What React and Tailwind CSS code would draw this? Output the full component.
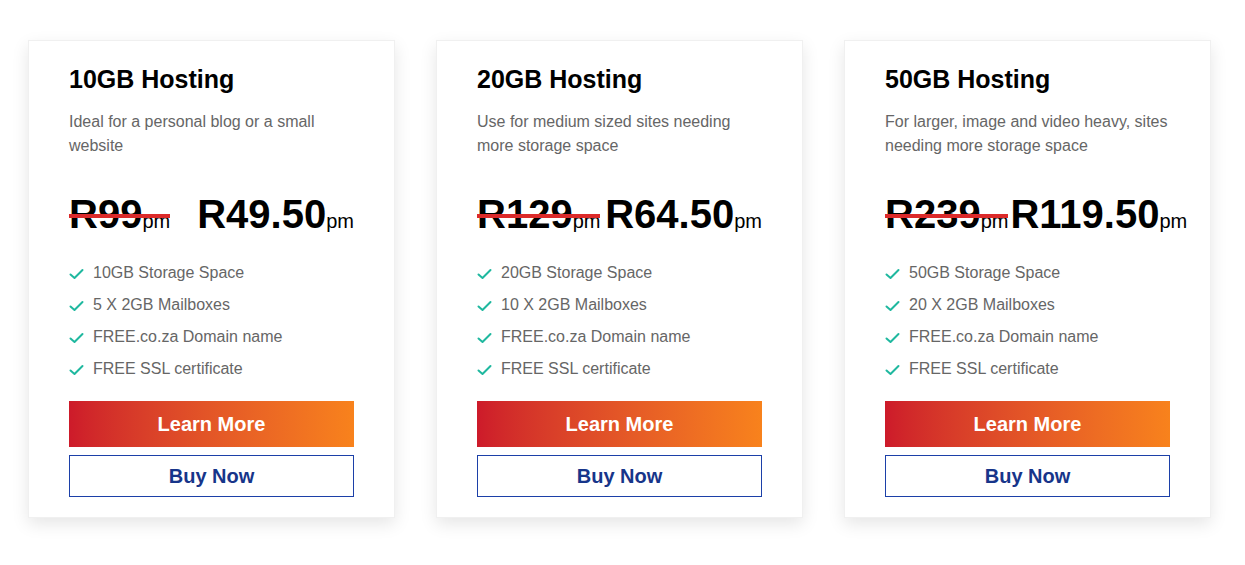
const plans = [
  {
    title: "10GB Hosting",
    desc: "Ideal for a personal blog or a small website",
    oldPrice: "R99",
    price: "R49.50",
    features: ["10GB Storage Space", "5 X 2GB Mailboxes", "FREE.co.za Domain name", "FREE SSL certificate"],
  },
  {
    title: "20GB Hosting",
    desc: "Use for medium sized sites needing more storage space",
    oldPrice: "R129",
    price: "R64.50",
    features: ["20GB Storage Space", "10 X 2GB Mailboxes", "FREE.co.za Domain name", "FREE SSL certificate"],
  },
  {
    title: "50GB Hosting",
    desc: "For larger, image and video heavy, sites needing more storage space",
    oldPrice: "R239",
    price: "R119.50",
    features: ["50GB Storage Space", "20 X 2GB Mailboxes", "FREE.co.za Domain name", "FREE SSL certificate"],
  },
];

const Check = () => (
  <svg width="15" height="12" viewBox="0 0 15 12" className="mt-[7px] shrink-0">
    <path d="M1.5 6.5 L5.5 10 L13.5 2" fill="none" stroke="#1fb89f" strokeWidth="2" strokeLinecap="round" strokeLinejoin="round" />
  </svg>
);

const PlanCard = ({ plan }) => {
  return (
    <div className="w-[367px] bg-white border border-[#f0f0f0] shadow-[0_6px_16px_rgba(0,0,0,0.10)] px-10 pt-[22px] pb-5">
      <h3 className="text-[25px] leading-[32px] font-bold text-black">{plan.title}</h3>
      <p className="mt-[15px] text-[16px] leading-[24px] text-[#666]">{plan.desc}</p>
      <div className="mt-[32px] flex justify-between gap-[2px] whitespace-nowrap">
        <span className="relative text-[40px] leading-[48px] font-bold text-black">
          {plan.oldPrice}
          <span className="text-[20px] font-normal">pm</span>
          <span className="absolute left-0 right-0 top-[24px] h-[4px] bg-[#dc2a2a]"></span>
        </span>
        <span className="text-[40px] leading-[48px] font-bold text-black">
          {plan.price}
          <span className="text-[20px] font-normal">pm</span>
        </span>
      </div>
      <ul className="mt-[16px] flex flex-col gap-2">
        {plan.features.map((f) => (
          <li key={f} className="flex items-start gap-[9px] text-[16px] leading-[24px] text-[#666]">
            <Check />
            <span>{f}</span>
          </li>
        ))}
      </ul>
      <button className="mt-[20px] w-full h-[46px] bg-gradient-to-r from-[#cd1a2a] to-[#f8821c] text-white text-[20px] font-bold">
        Learn More
      </button>
      <button className="mt-[8px] w-full h-[42px] border border-[#1c40a8] text-[#17358a] text-[20px] font-bold bg-white">
        Buy Now
      </button>
    </div>
  );
};

export default function App() {
  return (
    <div className="min-h-[565px] bg-white pt-[40px] pl-[28px] flex gap-[41px] items-start" style={{ fontFamily: '"Liberation Sans", Arial, sans-serif' }}>
      {plans.map((p) => (
        <PlanCard key={p.title} plan={p} />
      ))}
    </div>
  );
}
